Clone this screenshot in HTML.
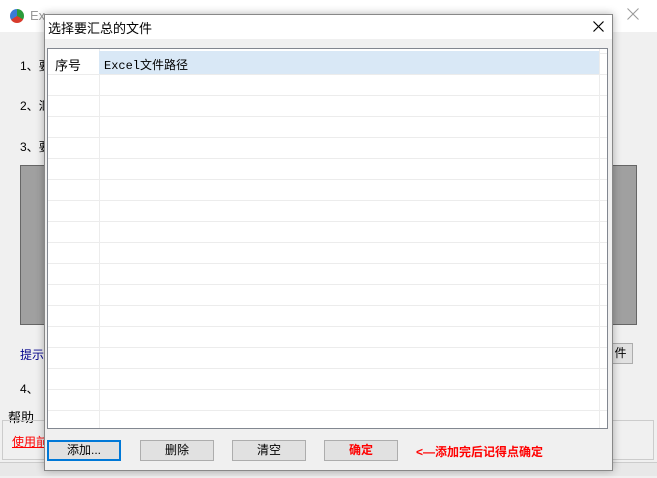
<!DOCTYPE html><html><head><meta charset="utf-8"><style>
*{margin:0;padding:0;box-sizing:border-box}
body{width:657px;height:478px;position:relative;overflow:hidden;background:#f0f0f0;font-family:"Liberation Sans","Noto Sans CJK SC",sans-serif;font-size:12px}
.a{position:absolute}
.btn{position:absolute;top:440px;height:21px;width:74px;background:#e1e1e1;border:1px solid #adadad;text-align:center;line-height:19px;font-size:12px}
</style></head><body>
<div class="a" style="left:0;top:0;width:657px;height:32px;background:#fff"></div>
<div class="a" style="left:10px;top:9px;width:14px;height:14px;border-radius:50%;background:conic-gradient(#2a9b3a 0 33%,#d83b2c 0 66%,#3a7bd5 0)"></div>
<div class="a" style="left:30px;top:8px;color:#999;font-size:13px">Ex</div>
<svg class="a" style="left:627px;top:8px" width="12" height="12"><path d="M0.5 0.5L11.5 11.5M11.5 0.5L0.5 11.5" stroke="#999" stroke-width="1"/></svg>
<div class="a" style="left:20px;top:57px">1、要</div>
<div class="a" style="left:20px;top:97px">2、汇</div>
<div class="a" style="left:20px;top:138px">3、要</div>
<div class="a" style="left:20px;top:165px;width:617px;height:160px;background:#a0a0a0;border:1px solid #666"></div>
<div class="a" style="left:20px;top:346px;color:#00008b">提示</div>
<div class="a" style="left:608px;top:343px;width:25px;height:21px;background:#e1e1e1;border:1px solid #adadad;text-align:center;line-height:19px">件</div>
<div class="a" style="left:20px;top:380px">4、</div>
<div class="a" style="left:8px;top:407px;font-size:13px">帮助</div>
<div class="a" style="left:2px;top:420px;width:652px;height:40px;border:1px solid #ccc"></div>
<div class="a" style="left:12px;top:433px;color:red;text-decoration:underline">使用前</div>
<div class="a" style="left:0;top:462px;width:657px;height:14px;border-top:1px solid #ccc;background:#e8e8e8"></div>
<div class="a" style="left:44px;top:14px;width:569px;height:457px;background:#f0f0f0;border:1px solid #888;box-shadow:0 0 8px rgba(0,0,0,.3)">
 <div class="a" style="left:0;top:0;width:567px;height:24px;background:#fff"></div>
 <div class="a" style="left:3px;top:3px;font-size:13px">选择要汇总的文件</div>
 <svg class="a" style="left:548px;top:6px" width="11" height="11"><path d="M0.5 0.5L10.5 10.5M10.5 0.5L0.5 10.5" stroke="#000" stroke-width="1.2"/></svg>
 <div class="a" style="left:2px;top:33px;width:561px;height:381px;background:#fff;border:1px solid #828790">
  <div class="a" style="left:0;top:0;width:559px;height:379px;background:repeating-linear-gradient(to bottom,transparent 0 4px,#ececec 4px 5px,transparent 5px 21px)"></div>
  <div class="a" style="left:51px;top:0;width:1px;height:379px;background:#ececec"></div>
  <div class="a" style="left:551px;top:0;width:1px;height:379px;background:#ececec"></div>
  <div class="a" style="left:51px;top:2px;width:500px;height:23px;background:#d9e8f6"></div>
  <div class="a" style="left:0;top:2px;width:51px;height:23px;background:#fff"></div>
  <div class="a" style="left:7px;top:6px;font-size:13px">序号</div>
  <div class="a" style="left:56px;top:7px;font-family:'Liberation Mono','Noto Sans CJK SC',monospace;font-size:12px">Excel文件路径</div>
 </div>
</div>
<div class="btn" style="left:47px;border:2px solid #0078d7;line-height:17px">添加...</div>
<div class="btn" style="left:140px">删除</div>
<div class="btn" style="left:232px">清空</div>
<div class="btn" style="left:324px;color:red;font-weight:bold">确定</div>
<div class="a" style="left:416px;top:443px;color:red;font-weight:bold">&lt;—添加完后记得点确定</div>
</body></html>
